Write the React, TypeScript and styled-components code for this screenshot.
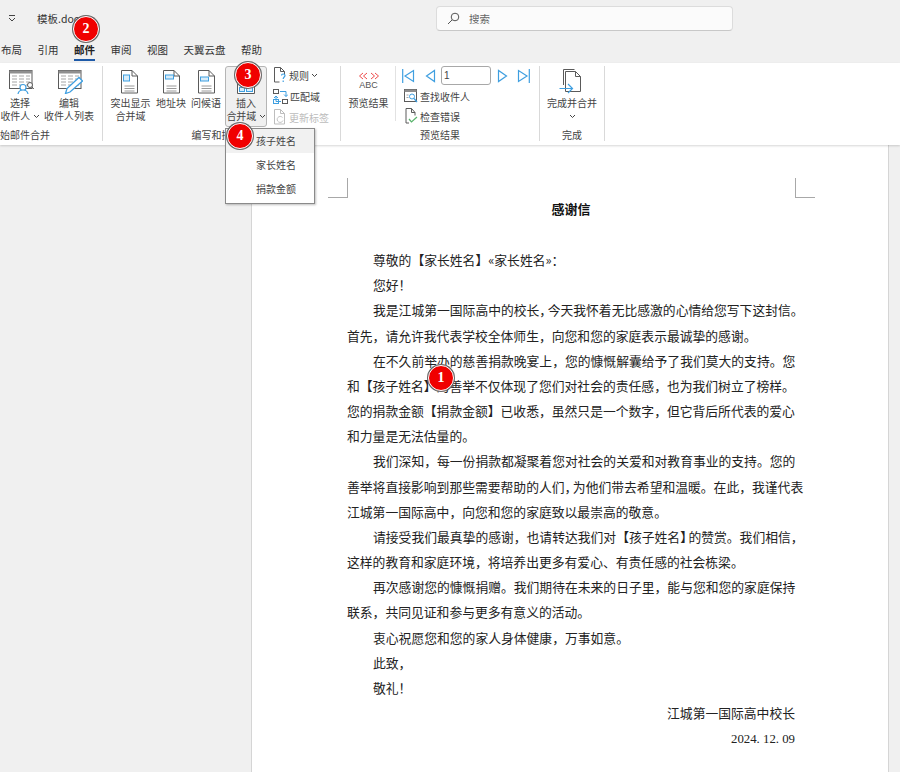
import React from 'react';
import styled, { createGlobalStyle } from 'styled-components';

const UI_FONT = '"Noto Sans CJK SC", "Noto Sans", sans-serif';

const GlobalStyle = createGlobalStyle`
  html, body {
    margin: 0;
    padding: 0;
    background: #f0f0f0;
  }
  body {
    font-family: ${UI_FONT};
    color: #333;
  }
`;

const GREY = '#5a5a5a';
const BLUE = '#3f9fe0';

function Chevron() {
  return (
    <ChevronSvg width="7" height="5" viewBox="0 0 7 5">
      <path d="M1 1l2.5 2.5L6 1" fill="none" stroke="#444" strokeWidth="1" />
    </ChevronSvg>
  );
}

function TableIcon({ pencil }: { pencil?: boolean }) {
  return (
    <svg width="28" height="24" viewBox="0 0 28 24">
      <rect x="3.5" y=".5" width="22.500" height="18" fill="#fff" stroke={GREY} />
      <rect x="3.5" y=".5" width="22.500" height="3" fill="#8f8f8f" />
      {[6, 9, 12, 15].map((y) => (
        <path key={y} d={`M6 ${y}h5M13 ${y}h5M20 ${y}h4`} stroke="#a5a5a5" />
      ))}
      {pencil ? (
        <path d="M10.500 23.500l1.500-5L24 7.500l3.500 3.500L15 22z" fill="#fff" stroke={BLUE} strokeWidth="1.300" />
      ) : (
        <>
          <circle cx="17" cy="17.500" r="3" fill="#fff" stroke={BLUE} strokeWidth="1.200" />
          <path d="M12 24c.5-3 2.500-4 5-4s4.500 1 5 4" fill="#fff" stroke={BLUE} strokeWidth="1.200" />
          <circle cx="24" cy="15" r="2.500" fill="#fff" stroke={GREY} />
          <path d="M26 17l1.800 2" stroke={GREY} />
        </>
      )}
    </svg>
  );
}

function DocIcon({ mark }: { mark: 'square' | 'top' | 'middle' }) {
  const y = mark === 'middle' ? 7 : 5;
  const h = mark === 'square' ? 6 : 4;
  return (
    <svg width="17" height="24" viewBox="0 0 17 24">
      <path d="M.5 .5h10.500l5.500 5.500v17H.500z" fill="#fff" stroke={GREY} />
      <path d="M11 .5V6h5.500" fill="none" stroke={GREY} />
      <path d="M3.500 16h10M3.500 18.500h10M3.500 21h10" stroke="#9a9a9a" />
      <rect x="2.500" y={y} width={mark === 'square' ? 6 : 8} height={h} fill="#d8ecf9" stroke={BLUE} />
    </svg>
  );
}

function InsertIcon() {
  return (
    <svg width="20" height="24" viewBox="0 0 20 24">
      <path d="M1.500 2.500h17v20h-17z" fill="#fff" stroke={GREY} />
      <rect x="3.500" y="16.500" width="5" height="4" fill="#d8ecf9" stroke={BLUE} />
      <rect x="10.500" y="16.500" width="6" height="4" fill="#d8ecf9" stroke={BLUE} />
    </svg>
  );
}

function RuleIcon() {
  return (
    <svg width="14" height="16" viewBox="0 0 14 16">
      <path d="M1.500 .5h6l4 4v3M1.500 .5v14.500h5" fill="none" stroke={GREY} />
      <path d="M7.500 .5v4h4" fill="none" stroke={GREY} />
      <path d="M8.500 8.500c0-2 3.500-2 3.500 0 0 1.500-1.800 1.500-1.800 3.500M10.200 13.500v1.500" fill="none" stroke={BLUE} strokeWidth="1.200" />
    </svg>
  );
}

function MatchIcon() {
  return (
    <svg width="15" height="15" viewBox="0 0 15 15">
      <rect x=".5" y=".5" width="5" height="4" fill="#fff" stroke={GREY} />
      <rect x="9.500" y="10.500" width="5" height="4" fill="#fff" stroke={GREY} />
      <rect x=".5" y="10.500" width="5" height="4" fill="#fff" stroke={BLUE} />
      <path d="M7 2.500h6v5M11 5.500l2 2 2-2M8 12.500H3V7M1 9l2-2 2 2" fill="none" stroke={BLUE} />
    </svg>
  );
}

function UpdateIcon() {
  return (
    <svg width="14" height="16" viewBox="0 0 14 16">
      <path d="M1.500 .5h6l4 4v10.500h-10z" fill="#fff" stroke="#bdbdbd" />
      <path d="M7.500 .5v4h4" fill="none" stroke="#bdbdbd" />
      <path d="M9.500 8.500a3 3 0 1 0 .5 3" fill="none" stroke="#c4c4c4" />
    </svg>
  );
}

function AbcIcon() {
  return (
    <AbcWrap>
      <svg width="22" height="8" viewBox="0 0 22 8">
        <path d="M5 1L1.500 4 5 7M9 1L5.500 4 9 7M13 1l3.500 3L13 7M17 1l3.500 3L17 7" fill="none" stroke="#ee4b4b" strokeWidth="1" />
      </svg>
      <AbcText>ABC</AbcText>
    </AbcWrap>
  );
}

function NavArrow({ dir, bar }: { dir: 'left' | 'right'; bar?: boolean }) {
  const size = bar ? 13 : 11;
  const d =
    dir === 'left'
      ? `M${size - 1.5} 1.500v11L${bar ? 3 : 1.5} 7z`
      : `M1.500 1.500v11L${bar ? size - 3 : size - 1.5} 7z`;
  return (
    <svg width={size} height="14" viewBox={`0 0 ${size} 14`}>
      <path d={d} fill="#fff" stroke={BLUE} strokeWidth="1.200" />
      {bar && <path d={dir === 'left' ? 'M.7 0v14' : 'M12.300 0v14'} stroke={BLUE} strokeWidth="1.200" />}
    </svg>
  );
}

function FindIcon() {
  return (
    <svg width="14" height="14" viewBox="0 0 14 14">
      <rect x=".5" y=".5" width="12" height="12" fill="#fff" stroke={GREY} />
      <rect x=".5" y=".5" width="12" height="2.500" fill="#8d8d8d" />
      <path d="M2.500 6h2M2.500 8.500h2" stroke="#a5a5a5" />
      <circle cx="8" cy="7.500" r="2.500" fill="#fff" stroke={BLUE} />
      <path d="M10 9.500l3 3.500" stroke={BLUE} strokeWidth="1.300" />
    </svg>
  );
}

function CheckIcon() {
  return (
    <svg width="14" height="16" viewBox="0 0 14 16">
      <path d="M2 .5h5.500l3.500 4v3M2 .5v14.500h3" fill="none" stroke={GREY} />
      <path d="M7.500 .5v4h3.500" fill="none" stroke={GREY} />
      <path d="M5 11l2.500 3L13 9" fill="none" stroke="#57b36a" strokeWidth="1.200" />
    </svg>
  );
}

function FinishIcon() {
  return (
    <svg width="23" height="25" viewBox="0 0 23 25">
      <path d="M4.500 16V.5h11" fill="none" stroke={GREY} />
      <path d="M6.500 2.500h10l5 5v15h-15z" fill="#fff" stroke={GREY} />
      <path d="M16.500 2.500v5h5" fill="none" stroke={GREY} />
      <path d="M.5 19.500h13M9 15l4.500 4.500L9 24" fill="none" stroke={BLUE} strokeWidth="1.200" />
    </svg>
  );
}

const TABS = ['布局', '引用', '邮件', '审阅', '视图', '天翼云盘', '帮助'];

// Word squeezes some punctuation to make a line fit, Squeezed does the same here
const LETTER: React.ReactNode[] = [
  <>尊敬的【家长姓名】«家长姓名»：</>,
  <>您好！</>,
  <>我是江城第一国际高中的校长<Squeezed>，</Squeezed>今天我怀着无比感激的心情给您写下这封信。首先，请允许我代表学校全体师生，向您和您的家庭表示最诚挚的感谢。</>,
  <>在不久前举办的慈善捐款晚宴上，您的慷慨解囊给予了我们莫大的支持。您和【孩子姓名】的善举不仅体现了您们对社会的责任感，也为我们树立了榜样。您的捐款金额【捐款金额】已收悉，虽然只是一个数字，但它背后所代表的爱心和力量是无法估量的。</>,
  <>我们深知，每一份捐款都凝聚着您对社会的关爱和对教育事业的支持。您的善举将直接影响到那些需要帮助的人们<Squeezed>，</Squeezed>为他们带去希望和温暖。在此，我谨代表江城第一国际高中，向您和您的家庭致以最崇高的敬意。</>,
  <>请接受我们最真挚的感谢，也请转达我们对【孩子姓名<Squeezed>】</Squeezed>的赞赏。我们相信，这样的教育和家庭环境，将培养出更多有爱心、有责任感的社会栋梁。</>,
  <>再次感谢您的慷慨捐赠。我们期待在未来的日子里，能与您和您的家庭保持联系，共同见证和参与更多有意义的活动。</>,
  <>衷心祝愿您和您的家人身体健康，万事如意。</>,
  <>此致，</>,
  <>敬礼！</>,
];

function App() {
  return (
    <AppWrapper>
      <GlobalStyle />

      <TitleBar>
        <QuickMenu>
          <svg width="8" height="7" viewBox="0 0 8 7">
            <path d="M1 .5h6M1 3l3 3 3-3" fill="none" stroke="#444" />
          </svg>
        </QuickMenu>
        <FileName>模板.docx</FileName>
        <SearchBox>
          <svg width="13" height="13" viewBox="0 0 13 13">
            <circle cx="8" cy="5" r="3.800" fill="none" stroke="#555" />
            <path d="M5.200 7.800L1 12" stroke="#555" />
          </svg>
          <SearchText>搜索</SearchText>
        </SearchBox>
      </TitleBar>

      <TabBar>
        {TABS.map((tab) => (
          <Tab key={tab} $active={tab === '邮件'}>
            {tab}
          </Tab>
        ))}
      </TabBar>

      <Ribbon>
        <Group $width={103}>
          <GroupBody $pad={0} $gap={4}>
            <BigButton $width={40}>
              <IconSlot><TableIcon /></IconSlot>
              <BigLabel>选择<br />收件人 <Chevron /></BigLabel>
            </BigButton>
            <BigButton $width={50}>
              <IconSlot><TableIcon pencil /></IconSlot>
              <BigLabel>编辑<br />收件人列表</BigLabel>
            </BigButton>
          </GroupBody>
          <GroupLabel $align="left">始邮件合并</GroupLabel>
        </Group>

        <Group $width={238}>
          <GroupBody $pad={7}>
            <BigButton $width={41}>
              <IconSlot $nudge={3}><DocIcon mark="square" /></IconSlot>
              <BigLabel>突出显示<br />合并域</BigLabel>
            </BigButton>
            <BigButton $width={30}>
              <IconSlot><DocIcon mark="top" /></IconSlot>
              <BigLabel>地址块</BigLabel>
            </BigButton>
            <BigButton $width={30}>
              <IconSlot><DocIcon mark="middle" /></IconSlot>
              <BigLabel>问候语</BigLabel>
            </BigButton>
            <InsertButton>
              <IconSlot><InsertIcon /></IconSlot>
              <BigLabel>插入<br />合并域 <Chevron /></BigLabel>
            </InsertButton>
            <SmallColumn>
              <SmallButton><RuleIcon />规则 <Chevron /></SmallButton>
              <SmallButton><MatchIcon />匹配域</SmallButton>
              <SmallButton $disabled><UpdateIcon />更新标签</SmallButton>
            </SmallColumn>
          </GroupBody>
          <GroupLabel>编写和插入域</GroupLabel>
        </Group>

        <Group $width={199}>
          <GroupBody $pad={1}>
            <PreviewButton>
              <IconSlot><AbcIcon /></IconSlot>
              <BigLabel>预览结果</BigLabel>
            </PreviewButton>
            <PreviewColumn>
              <NavRow>
                <NavArrow dir="left" bar />
                <NavArrow dir="left" />
                <RecordInput>1</RecordInput>
                <NavArrow dir="right" />
                <NavArrow dir="right" bar />
              </NavRow>
              <SmallButton><FindIcon />查找收件人</SmallButton>
              <SmallButton><CheckIcon />检查错误</SmallButton>
            </PreviewColumn>
          </GroupBody>
          <GroupLabel>预览结果</GroupLabel>
        </Group>

        <Group $width={65}>
          <GroupBody $pad={0}>
            <BigButton $width={64}>
              <IconSlot $nudge={3}><FinishIcon /></IconSlot>
              <BigLabel>完成并合并<br /><Chevron /></BigLabel>
            </BigButton>
          </GroupBody>
          <GroupLabel>完成</GroupLabel>
        </Group>
      </Ribbon>

      <Workspace>
        <Page>
          <CropMark $side="left" />
          <CropMark $side="right" />
          <LetterTitle>感谢信</LetterTitle>
          <LetterBody>
            {LETTER.map((text, i) => (
              <Paragraph key={i}>{text}</Paragraph>
            ))}
            <Signature>江城第一国际高中校长</Signature>
            <DateLine>2024<DateDot>.</DateDot>12<DateDot>.</DateDot>09</DateLine>
          </LetterBody>
        </Page>
      </Workspace>

      <FieldMenu>
        <MenuItem $active>孩子姓名</MenuItem>
        <MenuItem>家长姓名</MenuItem>
        <MenuItem>捐款金额</MenuItem>
      </FieldMenu>

      <Badge $x={428} $y={365}>1</Badge>
      <Badge $x={73} $y={16}>2</Badge>
      <Badge $x={235} $y={62}>3</Badge>
      <Badge $x={227} $y={123}>4</Badge>
    </AppWrapper>
  );
}

const AppWrapper = styled.div`
  position: relative;
  width: 900px;
  height: 772px;
  overflow: hidden;
  background: #f0f0f0;
  display: flex;
  flex-direction: column;
`;

const TitleBar = styled.header`
  height: 40px;
  flex: none;
  display: flex;
  align-items: center;
  padding: 0 0 3px 8px;
  box-sizing: border-box;
`;

const QuickMenu = styled.div`
  width: 8px;
  display: flex;
`;

const FileName = styled.div`
  margin-left: 21px;
  font-size: 10.5px;
  width: 399px;
  color: #333;
`;

const SearchBox = styled.div`
  width: 297px;
  height: 25px;
  box-sizing: border-box;
  background: #fbfbfb;
  border: 1px solid #dcdcdc;
  border-bottom-color: #c8c8c8;
  border-radius: 4px;
  display: flex;
  align-items: center;
  padding-left: 10px;
  gap: 9px;
`;

const SearchText = styled.span`
  font-size: 10.5px;
  color: #666;
`;

const TabBar = styled.nav`
  height: 23px;
  flex: none;
  box-sizing: border-box;
  display: flex;
  gap: 15.500px;
  padding: 1px 0 0 1px;
  align-items: flex-start;
`;

const Tab = styled.div<{ $active?: boolean }>`
  font-size: 10.5px;
  line-height: 18px;
  height: 18px;
  font-weight: ${(p) => (p.$active ? 700 : 400)};
  color: ${(p) => (p.$active ? '#222' : '#333')};
  border-bottom: 2px solid ${(p) => (p.$active ? '#1e5aa8' : 'transparent')};
`;

const Ribbon = styled.section`
  height: 82px;
  flex: none;
  background: #fff;
  display: flex;
  padding-top: 3px;
  box-sizing: border-box;
  box-shadow: 0 1px 2px rgba(0, 0, 0, 0.16);
  position: relative;
  z-index: 1;
`;

const Group = styled.div<{ $width: number }>`
  width: ${(p) => p.$width}px;
  height: 75px;
  flex: none;
  box-sizing: border-box;
  border-right: 1px solid #d9d9d9;
  display: flex;
  flex-direction: column;
`;

const GroupBody = styled.div<{ $pad: number; $gap?: number }>`
  height: 62px;
  flex: none;
  display: flex;
  gap: ${(p) => p.$gap ?? 5}px;
  padding-left: ${(p) => p.$pad}px;
`;

const GroupLabel = styled.div<{ $align?: string }>`
  font-size: 10px;
  line-height: 14px;
  color: #444;
  white-space: nowrap;
  text-align: ${(p) => p.$align || 'center'};
`;

const BigButton = styled.div<{ $width: number }>`
  width: ${(p) => p.$width}px;
  flex: none;
  display: flex;
  flex-direction: column;
  align-items: center;
`;

const IconSlot = styled.div<{ $nudge?: number }>`
  height: 28px;
  flex: none;
  display: flex;
  align-items: flex-end;
  justify-content: center;
  padding-right: ${(p) => p.$nudge ?? 0}px;
`;

const BigLabel = styled.div`
  margin-top: 3px;
  font-size: 10px;
  line-height: 12.500px;
  text-align: center;
  white-space: nowrap;
  color: #444;
`;

const InsertButton = styled(BigButton).attrs({ $width: 42 })`
  height: 61px;
  margin-left: -1px;
  box-sizing: border-box;
  background: #f0f0f0;
  border: 1px solid #b5b5b5;
  border-radius: 3px;

  ${BigLabel} {
    margin-top: 2px;
  }
`;

const ChevronSvg = styled.svg`
  vertical-align: 1px;
`;

const SmallColumn = styled.div`
  display: flex;
  flex-direction: column;
  gap: 5px;
  margin: 1px 0 0 1px;
`;

const SmallButton = styled.div<{ $disabled?: boolean }>`
  height: 16px;
  display: flex;
  align-items: center;
  gap: 2px;
  font-size: 10px;
  white-space: nowrap;
  color: ${(p) => (p.$disabled ? '#bcbcbc' : '#444')};
`;

const PreviewButton = styled(BigButton).attrs({ $width: 53 })`
  border-right: 1px solid #e2e2e2;
  height: 55px;
`;

const AbcWrap = styled.div`
  display: flex;
  flex-direction: column;
  align-items: center;
  padding-bottom: 3px;
`;

const AbcText = styled.span`
  font-family: "Liberation Sans", sans-serif;
  font-size: 9px;
  line-height: 11px;
  color: #555;
`;

const PreviewColumn = styled.div`
  display: flex;
  flex-direction: column;
  gap: 4px;
  padding-left: 1px;

  ${SmallButton} {
    margin-left: 2px;
  }
`;

const NavRow = styled.div`
  display: flex;
  align-items: center;
  gap: 9.500px;
  height: 19px;
  margin-bottom: -1px;
`;

const RecordInput = styled.div`
  width: 50px;
  height: 19px;
  margin: 0 -4px;
  box-sizing: border-box;
  border: 1px solid #a8a8a8;
  border-radius: 3px;
  font-family: "Liberation Sans", sans-serif;
  font-size: 10px;
  line-height: 17px;
  padding-left: 2px;
  color: #444;
`;

const Workspace = styled.main`
  flex: 1;
  min-height: 0;
  padding-left: 251px;
  box-sizing: border-box;
`;

const Page = styled.article`
  position: relative;
  width: 638px;
  height: 100%;
  box-sizing: border-box;
  background: #fff;
  border-left: 1px solid #d5d5d5;
  border-right: 1px solid #d5d5d5;
  padding: 54px 0 0 95px;
`;

const CropMark = styled.div<{ $side: 'left' | 'right' }>`
  position: absolute;
  top: 33px;
  width: 19px;
  height: 19px;
  border-bottom: 1px solid #a8a8a8;
  ${(p) =>
    p.$side === 'left'
      ? 'left: 76px; border-right: 1px solid #a8a8a8;'
      : 'left: 543px; border-left: 1px solid #a8a8a8;'}
`;

const LetterTitle = styled.h1`
  width: 448px;
  margin: 0 0 28px;
  font-size: 13px;
  line-height: 20px;
  font-weight: 700;
  text-align: center;
  color: #111;
`;

const LetterBody = styled.div`
  width: 457px;
  font-size: 12.800px;
  line-height: 25.170px;
  color: #222;
`;

const Paragraph = styled.p`
  margin: 0;
  text-indent: 26px;
`;

const SqueezedMark = styled.span`
  letter-spacing: -4.500px;
`;

function Squeezed({ children }: { children: React.ReactNode }) {
  return <SqueezedMark>{children}</SqueezedMark>;
}

const Signature = styled.p`
  margin: 0;
  padding-right: 9px;
  text-align: right;
`;

const DateLine = styled(Signature)`
  padding-top: 2px;
  font-family: "Liberation Serif", serif;
`;

const DateDot = styled.span`
  letter-spacing: 3.200px;
`;

const FieldMenu = styled.div`
  position: absolute;
  left: 225px;
  top: 128px;
  width: 90px;
  height: 76px;
  box-sizing: border-box;
  background: #fff;
  border: 1px solid #8a8a8a;
  box-shadow: 1px 1px 2px rgba(0, 0, 0, 0.25);
  z-index: 2;
`;

const MenuItem = styled.div<{ $active?: boolean }>`
  height: 24px;
  line-height: 24px;
  padding-left: 30px;
  font-size: 10px;
  color: #444;
  background: ${(p) => (p.$active ? '#f1f1f1' : 'transparent')};
`;

const Badge = styled.div<{ $x: number; $y: number }>`
  position: absolute;
  left: ${(p) => p.$x}px;
  top: ${(p) => p.$y}px;
  width: 26px;
  height: 26px;
  box-sizing: border-box;
  border-radius: 50%;
  background: #f00000;
  border: 1px solid #fff;
  box-shadow: 0 0 0 1px #666;
  color: #fff;
  font-family: "Liberation Serif", serif;
  font-size: 14px;
  font-weight: 700;
  line-height: 24px;
  text-align: center;
  z-index: 3;
`;

export default App;
